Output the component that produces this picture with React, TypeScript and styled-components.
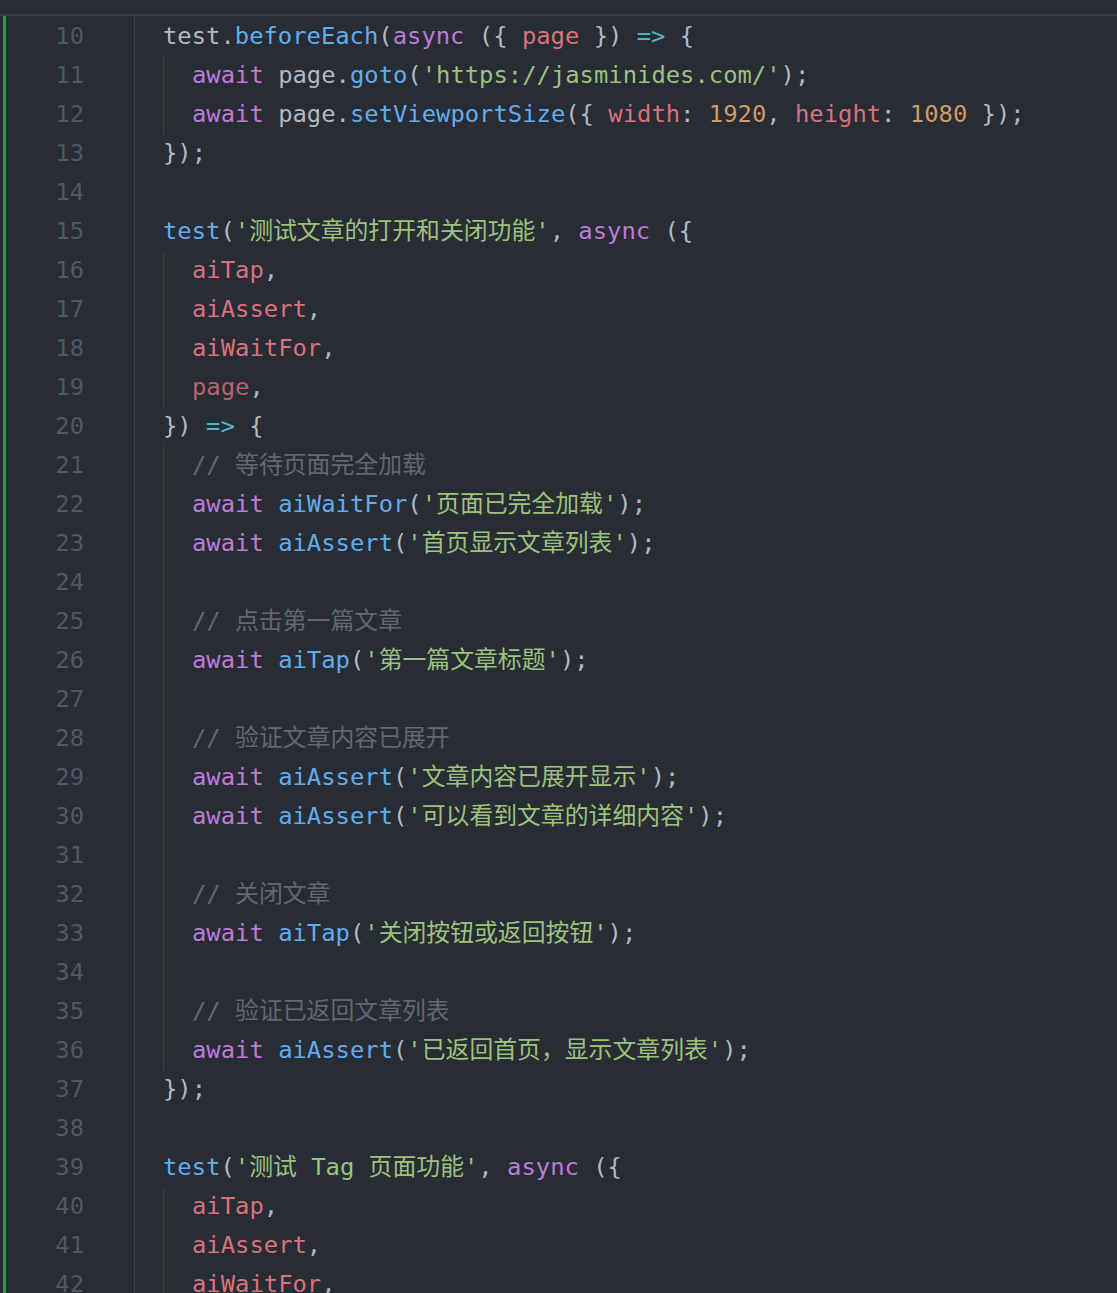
import React from "react";
import styled, { createGlobalStyle } from "styled-components";

const GlobalStyle = createGlobalStyle`
  html, body {
    margin: 0;
    padding: 0;
    background: #282c34;
    overflow: hidden;
  }
  #root {
    height: 1293px;
  }
`;

type Kind = "p" | "k" | "f" | "v" | "vd" | "s" | "n" | "c" | "o";
type Tok = [Kind, string];
interface LineData {
  n: number;
  guide?: boolean;
  toks: Tok[];
}

const colors: Record<Kind, string> = {
  p: "#b3b8c2",
  k: "#bd7ad9",
  f: "#62aceb",
  v: "#d8727b",
  vd: "#b8636c",
  s: "#9dc27d",
  n: "#d19a66",
  c: "#626874",
  o: "#4fb5c1",
};

const lines: LineData[] = [
  { n: 10, toks: [["p", "test."], ["f", "beforeEach"], ["p", "("], ["k", "async"], ["p", " ({ "], ["v", "page"], ["p", " }) "], ["o", "=>"], ["p", " {"]] },
  { n: 11, guide: true, toks: [["k", "await"], ["p", " page."], ["f", "goto"], ["p", "("], ["s", "'https://jasminides.com/'"], ["p", ");"]] },
  { n: 12, guide: true, toks: [["k", "await"], ["p", " page."], ["f", "setViewportSize"], ["p", "({ "], ["v", "width"], ["p", ": "], ["n", "1920"], ["p", ", "], ["v", "height"], ["p", ": "], ["n", "1080"], ["p", " });"]] },
  { n: 13, toks: [["p", "});"]] },
  { n: 14, toks: [] },
  { n: 15, toks: [["f", "test"], ["p", "("], ["s", "'测试文章的打开和关闭功能'"], ["p", ", "], ["k", "async"], ["p", " ({"]] },
  { n: 16, guide: true, toks: [["v", "aiTap"], ["p", ","]] },
  { n: 17, guide: true, toks: [["v", "aiAssert"], ["p", ","]] },
  { n: 18, guide: true, toks: [["v", "aiWaitFor"], ["p", ","]] },
  { n: 19, guide: true, toks: [["vd", "page"], ["p", ","]] },
  { n: 20, toks: [["p", "}) "], ["o", "=>"], ["p", " {"]] },
  { n: 21, guide: true, toks: [["c", "// 等待页面完全加载"]] },
  { n: 22, guide: true, toks: [["k", "await"], ["p", " "], ["f", "aiWaitFor"], ["p", "("], ["s", "'页面已完全加载'"], ["p", ");"]] },
  { n: 23, guide: true, toks: [["k", "await"], ["p", " "], ["f", "aiAssert"], ["p", "("], ["s", "'首页显示文章列表'"], ["p", ");"]] },
  { n: 24, guide: true, toks: [] },
  { n: 25, guide: true, toks: [["c", "// 点击第一篇文章"]] },
  { n: 26, guide: true, toks: [["k", "await"], ["p", " "], ["f", "aiTap"], ["p", "("], ["s", "'第一篇文章标题'"], ["p", ");"]] },
  { n: 27, guide: true, toks: [] },
  { n: 28, guide: true, toks: [["c", "// 验证文章内容已展开"]] },
  { n: 29, guide: true, toks: [["k", "await"], ["p", " "], ["f", "aiAssert"], ["p", "("], ["s", "'文章内容已展开显示'"], ["p", ");"]] },
  { n: 30, guide: true, toks: [["k", "await"], ["p", " "], ["f", "aiAssert"], ["p", "("], ["s", "'可以看到文章的详细内容'"], ["p", ");"]] },
  { n: 31, guide: true, toks: [] },
  { n: 32, guide: true, toks: [["c", "// 关闭文章"]] },
  { n: 33, guide: true, toks: [["k", "await"], ["p", " "], ["f", "aiTap"], ["p", "("], ["s", "'关闭按钮或返回按钮'"], ["p", ");"]] },
  { n: 34, guide: true, toks: [] },
  { n: 35, guide: true, toks: [["c", "// 验证已返回文章列表"]] },
  { n: 36, guide: true, toks: [["k", "await"], ["p", " "], ["f", "aiAssert"], ["p", "("], ["s", "'已返回首页，显示文章列表'"], ["p", ");"]] },
  { n: 37, toks: [["p", "});"]] },
  { n: 38, toks: [] },
  { n: 39, toks: [["f", "test"], ["p", "("], ["s", "'测试 Tag 页面功能'"], ["p", ", "], ["k", "async"], ["p", " ({"]] },
  { n: 40, guide: true, toks: [["v", "aiTap"], ["p", ","]] },
  { n: 41, guide: true, toks: [["v", "aiAssert"], ["p", ","]] },
  { n: 42, guide: true, toks: [["v", "aiWaitFor"], ["p", ","]] },
];

const MONO = `"DejaVu Sans Mono", "Noto Sans CJK SC", monospace`;
const LINE_H = 39;

const Window = styled.div`
  height: 1293px;
  background: #282c34;
  display: flex;
  flex-direction: column;
  overflow: hidden;
`;

const TopStrip = styled.div`
  height: 14px;
  flex: none;
  border-bottom: 2px solid #3a3e49;
`;

const Editor = styled.div`
  flex: 1;
  min-height: 0;
  display: flex;
  align-items: stretch;
  padding-left: 3px;
  font-family: ${MONO};
  font-size: 23.85px;
  overflow: hidden;
`;

const Gutter = styled.div`
  flex: none;
  width: 132px;
  box-sizing: border-box;
  border-left: 3px solid #2e9a4e;
  border-right: 1px solid #1d4664;
  padding: 1px 50px 0 0;
  display: flex;
  flex-direction: column;
  align-items: flex-end;
`;

const LineNumber = styled.div`
  flex: none;
  height: ${LINE_H}px;
  line-height: ${LINE_H}px;
  color: #50576400;
  color: #515865;
`;

const Code = styled.div`
  flex: 1;
  padding: 1px 0 0 28px;
  display: flex;
  flex-direction: column;
`;

const CodeLine = styled.div`
  flex: none;
  height: ${LINE_H}px;
  line-height: ${LINE_H}px;
  display: flex;
  white-space: pre;
`;

const IndentGuide = styled.span`
  display: inline-block;
  flex: none;
  width: 29px;
  height: ${LINE_H}px;
  box-sizing: border-box;
  border-left: 1px solid #463d33;
`;

const Token = styled.span<{ $kind: Kind }>`
  color: ${(p) => colors[p.$kind]};
`;

export default function App() {
  return (
    <>
      <GlobalStyle />
      <Window>
        <TopStrip />
        <Editor>
          <Gutter>
            {lines.map((l) => (
              <LineNumber key={l.n}>{l.n}</LineNumber>
            ))}
          </Gutter>
          <Code>
            {lines.map((l) => (
              <CodeLine key={l.n}>
                {l.guide && <IndentGuide />}
                <span>
                  {l.toks.map((t, i) => (
                    <Token key={i} $kind={t[0]}>
                      {t[1]}
                    </Token>
                  ))}
                </span>
              </CodeLine>
            ))}
          </Code>
        </Editor>
      </Window>
    </>
  );
}
